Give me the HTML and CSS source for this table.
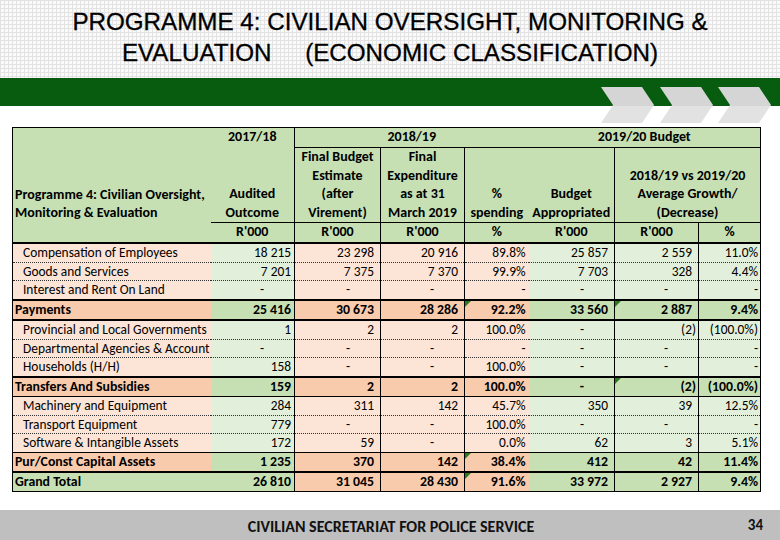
FILE: index.html
```html
<!DOCTYPE html>
<html lang="en">

<head>
    <meta charset="UTF-8">
    <title>Programme 4: Civilian Oversight, Monitoring &amp; Evaluation</title>
    <link rel="stylesheet" href="styles.css">
</head>

<body>
    <div class="slide">
        <div class="title-area">
            <h1>PROGRAMME 4: CIVILIAN OVERSIGHT, MONITORING &amp;<br>EVALUATION     (ECONOMIC CLASSIFICATION)</h1>
        </div>

        <div class="band">
            <!-- decorative chevrons sitting over the green band -->
            <svg class="chevrons" width="175" height="36" viewBox="0 0 175 36">
                <defs>
                    <linearGradient id="chev" x1="0" y1="0" x2="0" y2="1">
                        <stop offset="0" stop-color="#d5d5d5" />
                        <stop offset="0.52" stop-color="#d5d5d5" />
                        <stop offset="0.52" stop-color="#e2e2e2" />
                        <stop offset="1" stop-color="#e2e2e2" />
                    </linearGradient>
                </defs>
                <polygon points="0,0 41,0 53,18 41,36 0,36 12,18" fill="url(#chev)" />
                <polygon points="59,0 100,0 112,18 100,36 59,36 71,18" fill="url(#chev)" />
                <polygon points="117,0 158,0 170,18 158,36 117,36 129,18" fill="url(#chev)" />
            </svg>
        </div>

        <table class="budget">
            <colgroup>
                <col style="width: 198px">
                <col style="width: 84px">
                <col style="width: 86px">
                <col style="width: 84px">
                <col style="width: 64px">
                <col style="width: 86px">
                <col style="width: 84px">
                <col style="width: 62px">
            </colgroup>
            <thead>
                <tr class="hr1">
                    <th rowspan="2" class="lbl">Programme 4: Civilian Oversight,<br>Monitoring &amp; Evaluation</th>
                    <th class="y1">2017/18</th>
                    <th colspan="3" class="y2">2018/19</th>
                    <th colspan="3" class="y3">2019/20 Budget</th>
                </tr>
                <tr class="hr2">
                    <th class="br bb">Audited<br>Outcome</th>
                    <th class="br bb">Final Budget<br>Estimate<br>(after<br>Virement)</th>
                    <th class="br bb">Final<br>Expenditure<br>as at 31<br>March 2019</th>
                    <th class="bb">%<br>spending</th>
                    <th class="br bb">Budget<br>Appropriated</th>
                    <th colspan="2" class="bb">2018/19 vs 2019/20<br>Average Growth/<br>(Decrease)</th>
                </tr>
                <tr class="hr3">
                    <th class="lbl"></th>
                    <th class="br">R'000</th>
                    <th class="br">R'000</th>
                    <th class="br">R'000</th>
                    <th>%</th>
                    <th class="br">R'000</th>
                    <th class="br">R'000</th>
                    <th>%</th>
                </tr>
            </thead>
            <tbody>
                <tr class="item thick">
                    <td class="lbl">Compensation of Employees</td>
                    <td class="c1">18 215</td><td class="c2">23 298</td><td class="c3">20 916</td><td class="c4">89.8%</td>
                    <td class="c5">25 857</td><td class="c6">2 559</td><td class="c7">11.0%</td>
                </tr>
                <tr class="item">
                    <td class="lbl">Goods and Services</td>
                    <td class="c1">7 201</td><td class="c2">7 375</td><td class="c3">7 370</td><td class="c4">99.9%</td>
                    <td class="c5">7 703</td><td class="c6">328</td><td class="c7">4.4%</td>
                </tr>
                <tr class="item">
                    <td class="lbl">Interest and Rent On Land</td>
                    <td class="c1 d">-</td><td class="c2 d">-</td><td class="c3 d">-</td><td class="c4">-</td>
                    <td class="c5 d">-</td><td class="c6 d">-</td><td class="c7">-</td>
                </tr>
                <tr class="total thick">
                    <td class="lbl">Payments</td>
                    <td class="c1">25 416</td><td class="c2">30 673</td><td class="c3">28 286</td><td class="c4 flag">92.2%</td>
                    <td class="c5">33 560</td><td class="c6 flag">2 887</td><td class="c7">9.4%</td>
                </tr>
                <tr class="item thick">
                    <td class="lbl">Provincial and Local Governments</td>
                    <td class="c1">1</td><td class="c2">2</td><td class="c3">2</td><td class="c4">100.0%</td>
                    <td class="c5 d">-</td><td class="c6 neg">(2)</td><td class="c7">(100.0%)</td>
                </tr>
                <tr class="item">
                    <td class="lbl">Departmental Agencies &amp; Account</td>
                    <td class="c1 d">-</td><td class="c2 d">-</td><td class="c3 d">-</td><td class="c4">-</td>
                    <td class="c5 d">-</td><td class="c6 d">-</td><td class="c7">-</td>
                </tr>
                <tr class="item">
                    <td class="lbl">Households (H/H)</td>
                    <td class="c1">158</td><td class="c2 d">-</td><td class="c3 d">-</td><td class="c4">100.0%</td>
                    <td class="c5 d">-</td><td class="c6 d">-</td><td class="c7">-</td>
                </tr>
                <tr class="total thick">
                    <td class="lbl">Transfers And Subsidies</td>
                    <td class="c1">159</td><td class="c2">2</td><td class="c3">2</td><td class="c4">100.0%</td>
                    <td class="c5 d">-</td><td class="c6 neg flag">(2)</td><td class="c7">(100.0%)</td>
                </tr>
                <tr class="item solid">
                    <td class="lbl">Machinery and Equipment</td>
                    <td class="c1">284</td><td class="c2">311</td><td class="c3">142</td><td class="c4">45.7%</td>
                    <td class="c5">350</td><td class="c6">39</td><td class="c7">12.5%</td>
                </tr>
                <tr class="item">
                    <td class="lbl">Transport Equipment</td>
                    <td class="c1">779</td><td class="c2 d">-</td><td class="c3 d">-</td><td class="c4">100.0%</td>
                    <td class="c5 d">-</td><td class="c6 d">-</td><td class="c7">-</td>
                </tr>
                <tr class="item">
                    <td class="lbl">Software &amp; Intangible Assets</td>
                    <td class="c1">172</td><td class="c2">59</td><td class="c3 d">-</td><td class="c4">0.0%</td>
                    <td class="c5">62</td><td class="c6">3</td><td class="c7">5.1%</td>
                </tr>
                <tr class="total solid">
                    <td class="lbl">Pur/Const Capital Assets</td>
                    <td class="c1">1 235</td><td class="c2">370</td><td class="c3">142</td><td class="c4 flag">38.4%</td>
                    <td class="c5">412</td><td class="c6">42</td><td class="c7">11.4%</td>
                </tr>
                <tr class="grand thick">
                    <td class="lbl">Grand Total</td>
                    <td class="c1">26 810</td><td class="c2">31 045</td><td class="c3">28 430</td><td class="c4 flag">91.6%</td>
                    <td class="c5">33 972</td><td class="c6">2 927</td><td class="c7">9.4%</td>
                </tr>
            </tbody>
        </table>

        <div class="footer">
            <span class="footer-text">CIVILIAN SECRETARIAT FOR POLICE SERVICE</span>
            <span class="page-no">34</span>
        </div>
    </div>
</body>

</html>
```

FILE: styles.css
```css
body {
    margin: 0;
    background-color: #fff;
    font-family: "Carlito", "Lato", sans-serif;
}

.slide {
    width: 780px;
    height: 540px;
    display: flex;
    flex-direction: column;
    overflow: hidden;
}

.title-area {
    height: 78px;
    background-color: #fafafa;
    background-image:
        linear-gradient(#e3e3e3 1px, transparent 1px),
        linear-gradient(90deg, #e3e3e3 1px, transparent 1px);
    background-size: 4px 4px;
}

h1 {
    margin: 0;
    padding-top: 6px;
    font-family: "Liberation Sans", Arial, sans-serif;
    font-weight: normal;
    font-size: 24.2px;
    line-height: 31px;
    text-align: center;
    white-space: pre;
    color: #000;
    -webkit-text-stroke: 0.3px #000;
}

.band {
    position: relative;
    height: 28px;
    background-color: #075c10;
}

.chevrons {
    position: absolute;
    left: 601px;
    top: 9px;
}

.budget {
    position: relative;
    margin: 21px 0 0 12px;
    width: 748px;
    table-layout: fixed;
    border-collapse: collapse;
    border-left: 1px solid #000;
    border-right: 1px solid #000;
    border-bottom: 1px solid #000;
    font-size: 13.4px;
    color: #000;
}

/* header */

.budget th {
    padding: 0;
    background-color: #c6e0b4;
    font-size: 14px;
    font-weight: bold;
    text-align: center;
    vertical-align: bottom;
    line-height: 18.6px;
}

.budget thead tr:first-child th {
    border-top: 1px solid #000;
}

.hr1 {
    height: 20px;
}

.hr1 th {
    vertical-align: middle;
}

.hr1 th.lbl {
    vertical-align: bottom;
    text-align: left;
    padding-left: 2px;
}

.hr2 {
    height: 75px;
}

.hr3 {
    height: 19px;
}

.hr3 th {
    border-bottom: 2px solid #000;
    vertical-align: middle;
}

.y1 {
    border-right: 1px solid #000;
}

.y2,
.y3 {
    border-bottom: 1px solid #000;
}

.y2 {
    padding-left: 18px;
}

.br {
    border-right: 1px solid #000;
}

.bb {
    border-bottom: 1px solid #000;
}

/* body */

.budget td {
    padding: 0 6px 0 0;
    height: 17.75px;
    line-height: 17.75px;
    text-align: right;
    white-space: nowrap;
    border-top: 1px dotted #333;
}

.budget td.lbl {
    text-align: left;
    padding-left: 10px;
}

.budget td.c1,
.budget td.c2,
.budget td.c3,
.budget td.c5,
.budget td.c6 {
    border-right: 1px solid #000;
}

.budget td.c1,
.budget td.c4 {
    padding-right: 3px;
}

.budget td.c7 {
    padding-right: 2px;
}

.budget td.d {
    padding-right: 30px;
}

.budget td.neg {
    padding-right: 2px;
}

tr.thick td {
    border-top: 2px solid #000;
}

tr.solid td {
    border-top: 1px solid #000;
}

/* row colours */

.item td.lbl,
.item td.c2,
.item td.c3,
.item td.c4 {
    background-color: #fce4d6;
}

.item td.c1,
.item td.c5,
.item td.c6,
.item td.c7 {
    background-color: #e2efda;
}

.total td,
.grand td {
    font-size: 13.8px;
    font-weight: bold;
}

.total td.lbl,
.total td.c2,
.total td.c3,
.total td.c4,
.grand td.c2,
.grand td.c3,
.grand td.c4 {
    background-color: #f8cbad;
}

.total td.c1,
.total td.c5,
.total td.c6,
.total td.c7,
.grand td.lbl,
.grand td.c1,
.grand td.c5,
.grand td.c6,
.grand td.c7 {
    background-color: #c6e0b4;
}

.total td.lbl,
.grand td.lbl {
    padding-left: 2px;
}

/* little spreadsheet warning marks */
.budget td.flag {
    position: relative;
}

.budget td.flag::before {
    content: "";
    position: absolute;
    left: 0;
    top: 0;
    border-top: 6px solid #2f7a1f;
    border-right: 6px solid transparent;
}

/* footer */

.footer {
    margin-top: auto;
    height: 30px;
    background-color: #bfbfbf;
    display: grid;
    grid-template-columns: 1fr auto 1fr;
    align-items: center;
}

.footer-text {
    grid-column: 2;
    font-size: 16px;
    font-weight: bold;
    color: #111;
    padding-left: 2px;
    padding-top: 2px;
}

.page-no {
    grid-column: 3;
    justify-self: end;
    padding-right: 17px;
    font-size: 15px;
    font-weight: bold;
    color: #111;
}
```
